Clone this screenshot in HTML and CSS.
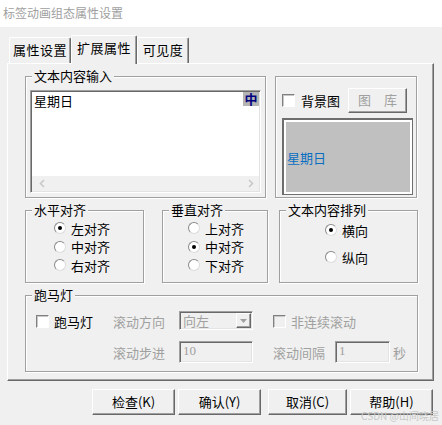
FILE: index.html
```html
<!DOCTYPE html>
<html lang="zh-CN">
<head>
    <meta charset="UTF-8">
    <title>标签动画组态属性设置</title>
    <link rel="stylesheet" href="styles.css">
</head>
<body>

    <div class="titlebar">标签动画组态属性设置</div>

    <!-- Tabs -->
    <div class="tabs">
        <div class="tab tab-1">属性设置</div>
        <div class="tab tab-2">扩展属性</div>
        <div class="tab tab-3">可见度</div>
    </div>

    <div class="panel">

        <!-- Text input + background -->
        <div class="row row-top">
            <div class="group group-text">
                <div class="legend">文本内容输入</div>
                <div class="textbox">
                    <div class="textbox-content">星期日</div>
                    <span class="ime">中</span>
                    <div class="hscroll">
                        <svg width="6" height="9" viewBox="0 0 6 9"><polyline points="5,1 1.5,4.5 5,8" fill="none" stroke="#c8c8c8" stroke-width="1.6"/></svg>
                        <svg width="6" height="9" viewBox="0 0 6 9"><polyline points="1,1 4.5,4.5 1,8" fill="none" stroke="#c8c8c8" stroke-width="1.6"/></svg>
                    </div>
                </div>
            </div>

            <div class="group group-bg">
                <div class="bg-row">
                    <span class="check"></span>
                    <span class="bg-label">背景图</span>
                    <div class="btn btn-lib">图　库</div>
                </div>
                <div class="preview">
                    <div class="preview-inner">星期日</div>
                </div>
            </div>
        </div>

        <!-- Alignment -->
        <div class="row row-mid">
            <div class="group group-h">
                <div class="legend">水平对齐</div>
                <div class="radio-list">
                    <div class="radio checked"><span class="circle"></span>左对齐</div>
                    <div class="radio"><span class="circle"></span>中对齐</div>
                    <div class="radio"><span class="circle"></span>右对齐</div>
                </div>
            </div>
            <div class="group group-v">
                <div class="legend">垂直对齐</div>
                <div class="radio-list">
                    <div class="radio"><span class="circle"></span>上对齐</div>
                    <div class="radio checked"><span class="circle"></span>中对齐</div>
                    <div class="radio"><span class="circle"></span>下对齐</div>
                </div>
            </div>
            <div class="group group-dir">
                <div class="legend">文本内容排列</div>
                <div class="radio-list">
                    <div class="radio checked"><span class="circle"></span>横向</div>
                    <div class="radio"><span class="circle"></span>纵向</div>
                </div>
            </div>
        </div>

        <!-- Marquee -->
        <div class="group group-marquee">
            <div class="legend">跑马灯</div>
            <div class="marquee-grid">
                <div class="check-item"><span class="check"></span>跑马灯</div>
                <div class="muted">滚动方向</div>
                <div class="combo">
                    <span class="combo-text">向左</span>
                    <span class="combo-btn">
                        <svg width="7" height="4" viewBox="0 0 7 4"><polygon points="0,0 7,0 3.5,4" fill="#a0a0a0"/></svg>
                    </span>
                </div>
                <div></div>
                <div class="check-item muted span-3"><span class="check disabled"></span>非连续滚动</div>

                <div></div>
                <div class="muted">滚动步进</div>
                <div class="field">10</div>
                <div></div>
                <div class="muted">滚动间隔</div>
                <div class="field">1</div>
                <div class="muted unit">秒</div>
            </div>
        </div>
    </div>

    <!-- Dialog buttons -->
    <div class="buttons">
        <div class="btn btn-dlg">检查(K)</div>
        <div class="btn btn-dlg">确认(Y)</div>
        <div class="btn btn-dlg btn-narrow">取消(C)</div>
        <div class="btn btn-dlg">帮助(H)</div>
    </div>

    <div class="watermark">CSDN @山间晓居</div>

</body>
</html>
```

FILE: styles.css
```css
* {
    box-sizing: border-box;
}

body {
    margin: 0;
    width: 442px;
    height: 425px;
    overflow: hidden;
    position: relative;
    background: #f0f0f0;
    font-family: "Noto Sans CJK SC", "Noto Sans", sans-serif;
    font-size: 13px;
    color: #000;
}

.titlebar {
    height: 27px;
    background: #fff;
    color: #a0a0a0;
    font-size: 12px;
    line-height: 25px;
    padding-left: 3px;
}

/* Tabs */
.tabs {
    display: flex;
    align-items: flex-end;
    height: 36px;
    padding-left: 9px;
    position: relative;
    z-index: 1;
}

.tab {
    height: 26px;
    line-height: 24px;
    text-align: center;
    border-top: 1px solid #fff;
    border-left: 1px solid #fff;
    border-right: 1px solid #696969;
    box-shadow: inset -1px 0 #a0a0a0;
    border-radius: 2px 2px 0 0;
    letter-spacing: 0.5px;
}

.tab-1 { width: 62px; }
.tab-3 { width: 52px; }

.tab-2 {
    width: 66px;
    height: 29px;
    margin-bottom: -1px;
    background: #f0f0f0;
}

.panel {
    margin-left: 7px;
    width: 427px;
    height: 318px;
    border: 1px solid;
    border-color: #fff #696969 #696969 #fff;
    box-shadow: inset -1px -1px #a0a0a0;
    padding: 12px 0 0 17px;
}

/* Group boxes */
.group {
    border: 1px solid #a0a0a0;
    box-shadow: inset 1px 1px #fff, 1px 1px #fff;
}

.legend {
    display: table;
    margin: -7px 0 0 6px;
    padding: 0 2px;
    background: #f0f0f0;
    line-height: 12px;
}

.row {
    display: flex;
}

.row-top {
    gap: 9px;
}

.group-text {
    width: 241px;
    height: 122px;
}

.textbox {
    position: relative;
    margin: 8px 4px 0;
    height: 103px;
    display: flex;
    flex-direction: column;
    background: #fff;
    border: 1px solid;
    border-color: #a0a0a0 #fff #fff #a0a0a0;
    box-shadow: inset 1px 1px #696969, inset -1px -1px #e3e3e3;
    padding: 1px;
}

.textbox-content {
    flex: 1;
    padding: 2px 2px;
    line-height: 13px;
}

.ime {
    position: absolute;
    top: 1px;
    right: 1px;
    width: 16px;
    height: 14px;
    background: #b4b4b4;
    color: #00007f;
    font-weight: bold;
    font-size: 13px;
    line-height: 14px;
    text-align: center;
}

.hscroll {
    height: 15px;
    background: #f0f0f0;
    display: flex;
    justify-content: space-between;
    align-items: center;
    padding: 0 5px 0 7px;
}

.group-bg {
    width: 142px;
    height: 122px;
    padding: 11px 0 0 6px;
}

.bg-row {
    display: flex;
    align-items: center;
    height: 25px;
}

.check {
    width: 13px;
    height: 13px;
    flex: none;
    background: #fff;
    border: 1px solid;
    border-color: #808080 #fff #fff #808080;
    box-shadow: inset 1px 1px #c8c8c8;
}

.check.disabled {
    background: #f0f0f0;
}

.bg-label {
    margin-left: 6px;
}

.btn {
    background: #f0f0f0;
    border: 1px solid;
    border-color: #fff #696969 #696969 #fff;
    box-shadow: inset -1px -1px #a0a0a0;
    text-align: center;
}

.btn-lib {
    margin-left: 8px;
    width: 59px;
    height: 25px;
    line-height: 22px;
    color: #a0a0a0;
}

.preview {
    margin-top: 5px;
    width: 131px;
    height: 77px;
    border: 2px solid #6e6e6e;
    border-right-width: 1px;
    border-bottom-width: 1px;
    padding: 2px;
    background: #fff;
}

.preview-inner {
    height: 100%;
    background: #c0c0c0;
    color: #0a6fc2;
    display: flex;
    align-items: center;
    padding-left: 1px;
}

/* Alignment row */
.row-mid {
    margin-top: 12px;
}

.group-h { width: 119px; height: 73px; }
.group-v { width: 106px; height: 73px; margin-left: 18px; }
.group-dir { width: 139px; height: 73px; margin-left: 11px; }

.radio-list {
    display: flex;
    flex-direction: column;
    margin-top: 3px;
}

.group-h .radio-list { padding-left: 28px; }
.group-v .radio-list { padding-left: 25px; }

.group-dir .radio-list {
    padding-left: 45px;
    margin-top: 5px;
    gap: 9px;
}

.radio {
    display: flex;
    align-items: center;
    height: 18.5px;
}

.group-dir .radio {
    height: 18px;
}

.circle {
    position: relative;
    width: 12px;
    height: 12px;
    margin-right: 5px;
    border-radius: 50%;
    background: #fff;
    border: 1px solid;
    border-color: #8a8a8a #dcdcdc #dcdcdc #8a8a8a;
}

.radio.checked .circle::after {
    content: "";
    position: absolute;
    left: 3px;
    top: 3px;
    width: 4px;
    height: 4px;
    border-radius: 50%;
    background: #000;
}

/* Marquee */
.group-marquee {
    margin-top: 12px;
    width: 393px;
    height: 77px;
}

.marquee-grid {
    display: grid;
    grid-template-columns: 77px 66px 74px 20px 62px 55px auto;
    grid-template-rows: 20px 22px;
    row-gap: 10px;
    margin-top: 10px;
    padding-left: 10px;
    align-items: center;
}

.muted {
    color: #a0a0a0;
}

.check-item {
    display: flex;
    align-items: center;
    gap: 5px;
}

.span-3 {
    grid-column: span 3;
}

.combo {
    height: 19px;
    align-self: start;
    display: flex;
    align-items: center;
    justify-content: space-between;
    border: 1px solid;
    border-color: #a0a0a0 #fff #fff #a0a0a0;
    box-shadow: inset 1px 1px #696969, inset -1px -1px #e3e3e3;
    padding: 1px;
    color: #a0a0a0;
}

.combo-text {
    padding-left: 2px;
}

.combo-btn {
    width: 15px;
    height: 15px;
    display: flex;
    align-items: center;
    justify-content: center;
    border: 1px solid;
    border-color: #fff #696969 #696969 #fff;
    box-shadow: inset -1px -1px #a0a0a0;
}

.field {
    height: 22px;
    line-height: 18px;
    padding-left: 3px;
    border: 1px solid;
    border-color: #a0a0a0 #fff #fff #a0a0a0;
    box-shadow: inset 1px 1px #696969, inset -1px -1px #e3e3e3;
    color: #a0a0a0;
    font-family: "Liberation Serif", serif;
    font-size: 13px;
}

.unit {
    padding-left: 3px;
}

/* Dialog buttons */
.buttons {
    display: flex;
    margin-top: 8px;
    padding-left: 92px;
}

.btn-dlg {
    width: 83px;
    height: 26px;
    line-height: 24px;
    margin-right: 3px;
}

.btn-narrow {
    width: 79px;
    margin-left: 4px;
}

.watermark {
    position: absolute;
    right: 3px;
    bottom: 4px;
    font-size: 10px;
    line-height: 11px;
    color: #c8c8c8;
}
```
